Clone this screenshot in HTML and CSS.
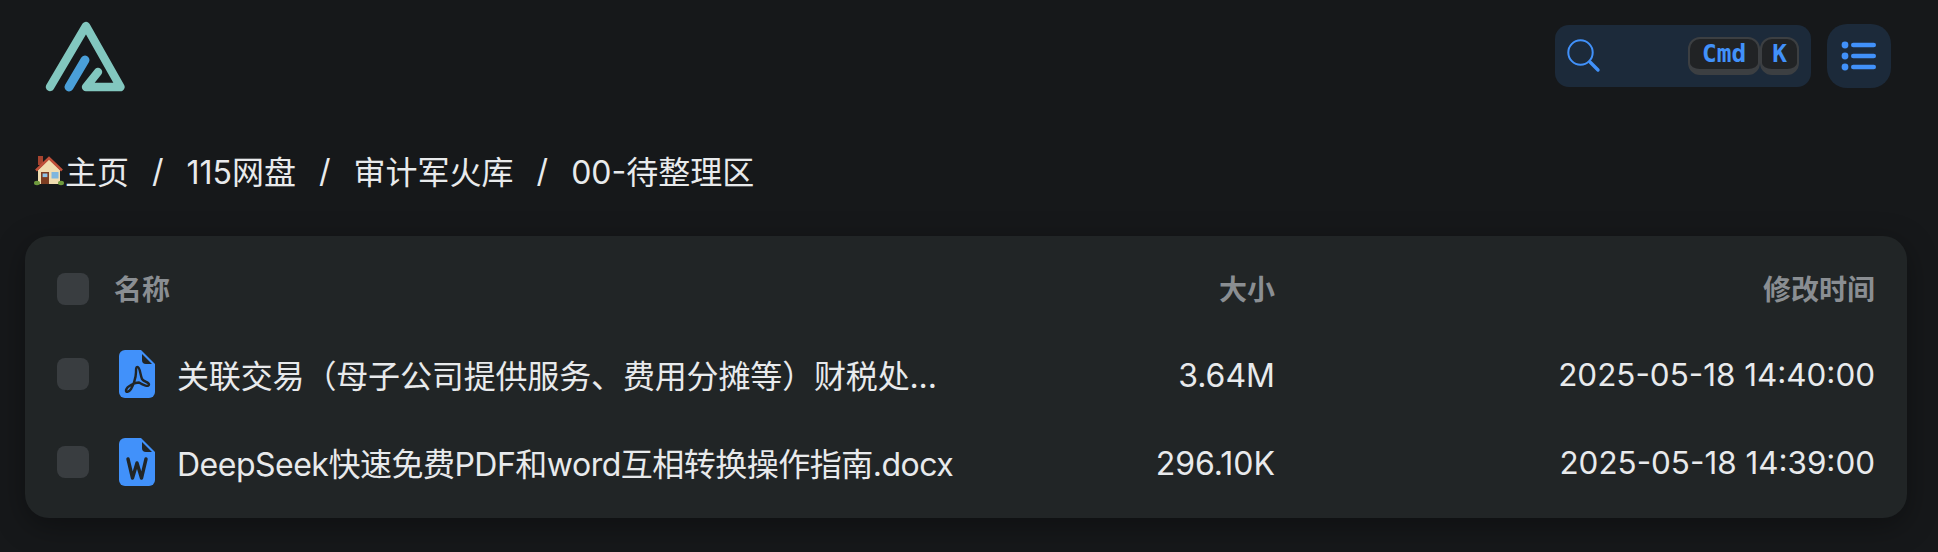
FILE: index.html
```html
<!DOCTYPE html>
<html lang="zh-CN">
<head>
    <meta charset="UTF-8">
    <meta name="viewport" content="width=device-width, initial-scale=1.0">
    <title>00-待整理区</title>
    <link rel="stylesheet" href="styles.css">
</head>
<body>
    <!-- Top bar: logo, search, menu -->
    <header class="topbar">
        <a class="logo" href="#">
            <svg width="84" height="76" viewBox="0 0 84 76" fill="none" stroke-linecap="round" stroke-linejoin="round">
                <path d="M5 69 41 8 75.500 69H41L53 54" stroke="#82c7bf" stroke-width="8.400"/>
                <path d="M24 69 40 42" stroke="#4a9fd8" stroke-width="9"/>
            </svg>
        </a>
        <div class="topbar-right">
            <div class="search">
                <svg width="34" height="34" viewBox="0 0 34 34" fill="none" stroke="#4191fa" stroke-linecap="round">
                    <circle cx="13.500" cy="13.500" r="12.200" stroke-width="2"/>
                    <path d="M23 23 31 31" stroke-width="3.400"/>
                </svg>
                <div class="keys">
                    <kbd class="key">Cmd</kbd>
                    <kbd class="key key-short">K</kbd>
                </div>
            </div>
            <button class="menu-button">
                <svg width="36" height="30" viewBox="0 0 36 30" fill="#4191fa">
                    <circle cx="4" cy="4" r="3.400"/>
                    <circle cx="4" cy="15" r="3.400"/>
                    <circle cx="4" cy="26" r="3.400"/>
                    <rect x="10" y="1.700" width="25" height="4.600" rx="2.300"/>
                    <rect x="10" y="12.700" width="25" height="4.600" rx="2.300"/>
                    <rect x="10" y="23.700" width="25" height="4.600" rx="2.300"/>
                </svg>
            </button>
        </div>
    </header>

    <!-- Breadcrumbs -->
    <nav class="breadcrumbs">
        <a href="#" class="crumb home-crumb">
            <svg width="30" height="31" viewBox="0 0 30 31">
                <rect x="4" y="1" width="5" height="9" fill="#a5432f"/>
                <path d="M4 15 15 4 26 15V29H4Z" fill="#f0dcb0"/>
                <path d="M2 15.500 15 3 28 15.500" fill="none" stroke="#c0503a" stroke-width="2.600"/>
                <rect x="7" y="17" width="8" height="12" fill="#7c3d22"/>
                <rect x="8.600" y="18.500" width="4.800" height="3.600" fill="#8ec4e8"/>
                <rect x="17.500" y="17" width="7" height="6.500" fill="#7fb6de"/>
                <ellipse cx="3" cy="28" rx="3" ry="2.200" fill="#6f9a3e"/>
                <ellipse cx="27" cy="28" rx="3" ry="2.200" fill="#6f9a3e"/>
            </svg>主页</a>
        <span class="sep">/</span>
        <a href="#" class="crumb">115网盘</a>
        <span class="sep">/</span>
        <a href="#" class="crumb">审计军火库</a>
        <span class="sep">/</span>
        <a href="#" class="crumb">00-待整理区</a>
    </nav>

    <!-- File list -->
    <section class="file-card">
        <div class="row head">
            <span class="check"></span>
            <span class="col-name">名称</span>
            <span class="col-size">大小</span>
            <span class="col-time">修改时间</span>
        </div>
        <div class="row">
            <span class="check"></span>
            <div class="col-name file">
                <svg class="file-icon" width="36" height="48" viewBox="0 0 36 48">
                    <path d="M6 0H22L36 14V42A6 6 0 0 1 30 48H6A6 6 0 0 1 0 42V6A6 6 0 0 1 6 0Z" fill="#4191fa"/>
                    <path d="M23 4V10A4 4 0 0 0 27 14H33Z" fill="#212526"/>
                    <path d="M18.500 17C21 17 21 24 23 29C25 32 30 32 30 34.500C30 37.500 24 35 20 32.500C16 32.500 8 36 7 40C6.500 43 10 42 12 39C14 36 17 28 17 22C17 19 17 17 18.500 17Z" fill="none" stroke="#212526" stroke-width="2.400" stroke-linejoin="round"/>
                </svg>
                <span class="file-name">关联交易（母子公司提供服务、费用分摊等）财税处...</span>
            </div>
            <span class="col-size">3.64M</span>
            <span class="col-time">2025-05-18 14:40:00</span>
        </div>
        <div class="row">
            <span class="check"></span>
            <div class="col-name file">
                <svg class="file-icon" width="36" height="48" viewBox="0 0 36 48">
                    <path d="M6 0H22L36 14V42A6 6 0 0 1 30 48H6A6 6 0 0 1 0 42V6A6 6 0 0 1 6 0Z" fill="#4191fa"/>
                    <path d="M23 4V10A4 4 0 0 0 27 14H33Z" fill="#212526"/>
                    <path d="M9 21 13.500 40 18 25 22.500 40 27 21" fill="none" stroke="#212526" stroke-width="3.400" stroke-linecap="round" stroke-linejoin="round"/>
                </svg>
                <span class="file-name mixed">DeepSeek快速免费PDF和word互相转换操作指南.docx</span>
            </div>
            <span class="col-size">296.10K</span>
            <span class="col-time">2025-05-18 14:39:00</span>
        </div>
    </section>
</body>
</html>
```

FILE: styles.css
```css
body {
    margin: 0;
    padding: 0 31px 0 25px;
    height: 552px;
    box-sizing: border-box;
    overflow: hidden;
    background-color: #16181a;
    color: #e8eaec;
    font-family: Inter, "Noto Sans CJK SC", sans-serif;
}

a {
    color: inherit;
    text-decoration: none;
}

/* Top bar */
.topbar {
    display: flex;
    justify-content: space-between;
    align-items: center;
    height: 112px;
}

.logo {
    display: flex;
    margin-left: 20px;
}

.topbar-right {
    display: flex;
    align-items: center;
    gap: 16px;
    margin-right: 16px;
}

.search {
    display: flex;
    align-items: center;
    justify-content: space-between;
    width: 256px;
    height: 62px;
    box-sizing: border-box;
    padding: 0 12px;
    border-radius: 14px;
    background-color: #1c2a3a;
}

.keys {
    display: flex;
}

.key {
    padding: 0 12px;
    height: 30px;
    line-height: 30px;
    border: 2px solid #3c3f42;
    border-bottom-width: 6px;
    border-radius: 12px;
    background-color: #212325;
    color: #4191fa;
    font-family: "DejaVu Sans Mono", monospace;
    font-size: 24.5px;
    font-weight: bold;
}

.key-short {
    padding: 0 10px;
}

.menu-button {
    display: flex;
    align-items: center;
    justify-content: center;
    width: 64px;
    height: 64px;
    padding: 0;
    border: none;
    border-radius: 20px;
    background-color: #1c2a3a;
}

/* Breadcrumbs */
.breadcrumbs {
    display: flex;
    align-items: center;
    height: 64px;
    margin-top: 26px;
    margin-bottom: 34px;
    font-size: 32px;
}

.home-crumb {
    display: flex;
    align-items: center;
    gap: 1px;
    margin-left: 9px;
}

.sep {
    margin: 0 23px;
}

/* File list */
.file-card {
    padding: 16px 32px 12px;
    height: 282px;
    box-sizing: border-box;
    border-radius: 24px;
    background-color: #212526;
    box-shadow: 0 8px 30px rgba(0, 0, 0, 0.35);
}

.row {
    display: flex;
    align-items: center;
    height: 88px;
    font-size: 32px;
}

.head {
    height: 73px;
    margin-bottom: 5px;
    color: #8a8e92;
    font-size: 28px;
    font-weight: bold;
}

.check {
    flex: none;
    width: 32px;
    height: 32px;
    border-radius: 8px;
    background-color: #393d40;
}

.col-name {
    flex: 1;
    margin-left: 25px;
    min-width: 0;
}

.file {
    display: flex;
    align-items: center;
    gap: 22px;
    padding-left: 5px;
}

.file-icon {
    flex: none;
}

.file-name {
    white-space: nowrap;
    letter-spacing: -0.15px;
}

.file-name.mixed {
    letter-spacing: -0.5px;
}

.col-size {
    width: 240px;
    padding-top: 2px;
    text-align: right;
}

.col-time {
    width: 600px;
    padding-top: 2px;
    text-align: right;
    font-size: 31.4px;
}

.head .col-name,
.head .col-size,
.head .col-time {
    padding-top: 0;
    padding-bottom: 2px;
    font-size: 28px;
}
```
